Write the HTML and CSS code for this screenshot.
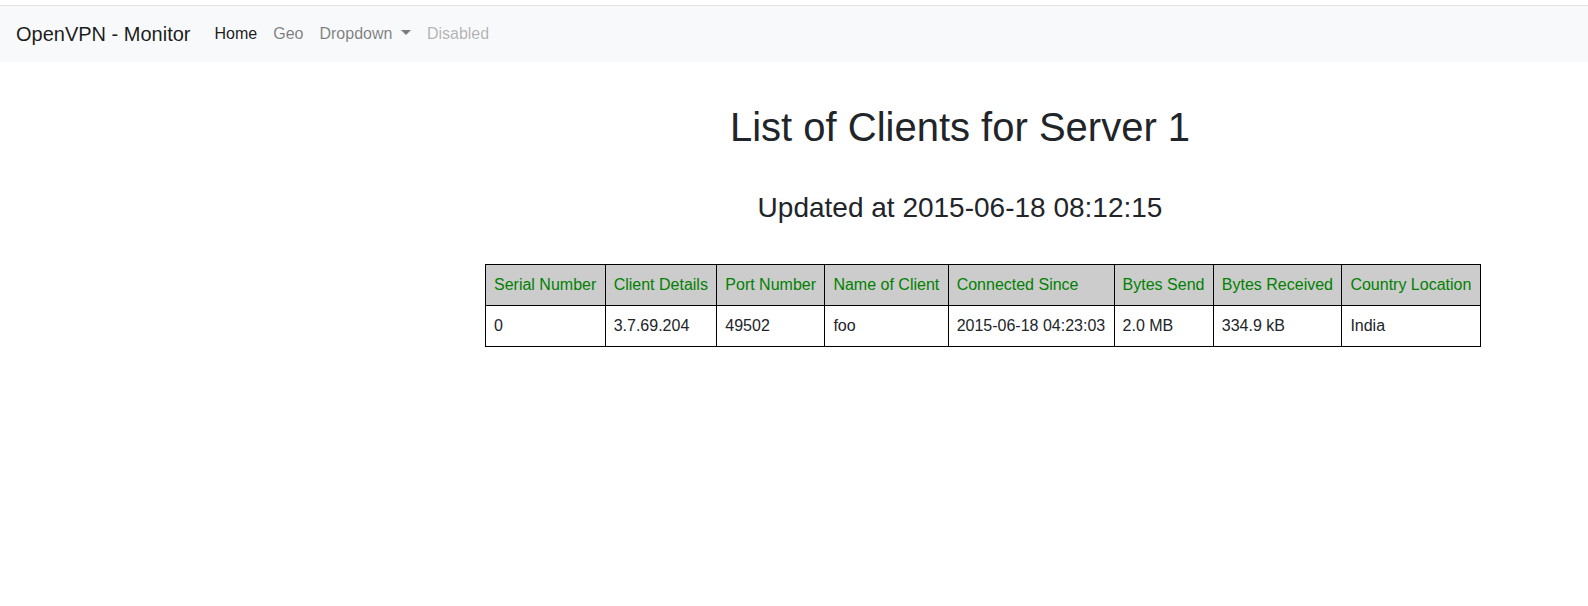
FILE: index.html
```html
<!DOCTYPE html>
<html lang="en">
<head>
<meta charset="utf-8">
<title>OpenVPN - Monitor</title>
<link rel="stylesheet" href="styles.css">
</head>
<body>
<div class="topline"></div>
<nav class="navbar">
  <a class="brand" href="#">OpenVPN - Monitor</a>
  <ul class="nav">
    <li><a class="nav-link active" href="#">Home</a></li>
    <li><a class="nav-link" href="#">Geo</a></li>
    <li><a class="nav-link dropdown" href="#">Dropdown </a></li>
    <li><a class="nav-link disabled" href="#">Disabled</a></li>
  </ul>
</nav>
<div class="page">
  <div class="sidebar"></div>
  <main class="content">
    <h1 class="title">List of Clients for Server 1</h1>
    <h3 class="subtitle">Updated at 2015-06-18 08:12:15</h3>
    <table class="clients">
      <thead>
        <tr>
          <th>Serial Number</th>
          <th>Client Details</th>
          <th>Port Number</th>
          <th>Name of Client</th>
          <th>Connected Since</th>
          <th>Bytes Send</th>
          <th>Bytes Received</th>
          <th>Country Location</th>
        </tr>
      </thead>
      <tbody>
        <tr>
          <td>0</td>
          <td>3.7.69.204</td>
          <td>49502</td>
          <td>foo</td>
          <td>2015-06-18 04:23:03</td>
          <td>2.0 MB</td>
          <td>334.9 kB</td>
          <td>India</td>
        </tr>
      </tbody>
    </table>
  </main>
</div>
</body>
</html>
```
FILE: styles.css
```css
html, body {
  margin: 0;
  padding: 0;
  background: #fff;
}
body {
  font-family: "Liberation Sans", Arial, sans-serif;
  font-size: 16px;
  line-height: 1.5;
  color: #212529;
}
.topline {
  height: 5px;
  border-bottom: 1px solid #dee2e6;
}
.navbar {
  display: flex;
  align-items: center;
  background: #f8f9fa;
  padding: 8px 16px;
  height: 40px;
}
.brand {
  font-size: 20px;
  line-height: 30px;
  padding: 5px 0;
  margin-right: 16px;
  color: rgba(0, 0, 0, 0.9);
  text-decoration: none;
  white-space: nowrap;
}
.nav {
  display: flex;
  list-style: none;
  margin: 0;
  padding: 0;
}
.nav-link {
  display: block;
  padding: 8px;
  color: rgba(0, 0, 0, 0.5);
  text-decoration: none;
  white-space: pre;
}
.nav-link.active {
  color: rgba(0, 0, 0, 0.9);
}
.nav-link.disabled {
  color: rgba(0, 0, 0, 0.3);
}
.nav-link.dropdown::after {
  content: "";
  display: inline-block;
  margin-left: 0.255em;
  vertical-align: 0.255em;
  border-top: 0.32em solid;
  border-right: 0.32em solid transparent;
  border-left: 0.32em solid transparent;
  border-bottom: 0;
}
.page {
  display: flex;
}
.sidebar {
  flex: 0 0 485px;
}
.content {
  flex: 0 0 950px;
  min-width: 0;
}
.title {
  font-size: 40px;
  font-weight: 500;
  line-height: 1.2;
  text-align: center;
  margin: 41px 0 40px;
}
.subtitle {
  font-size: 28px;
  font-weight: 500;
  line-height: 1.2;
  text-align: center;
  margin: 0 0 39px;
}
.clients {
  border-collapse: collapse;
  border: 1px solid #000;
  white-space: nowrap;
}
.clients th,
.clients td {
  border: 1px solid #000;
  padding: 8px 8.4px 8px 8px;
  text-align: left;
  font-weight: normal;
}
.clients th {
  background: #cccccc;
  color: #008000;
}
```
